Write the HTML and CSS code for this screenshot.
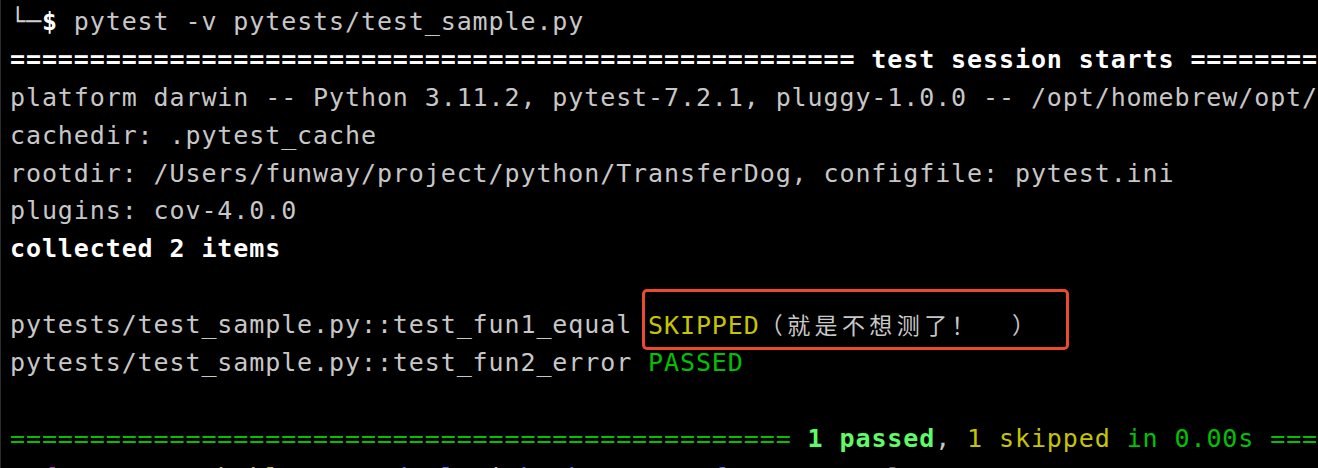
FILE: index.html
```html
<!DOCTYPE html>
<html lang="en">

<head>
    <meta charset="UTF-8">
    <meta name="viewport" content="width=device-width, initial-scale=1.0">
    <title>pytest -v</title>

    <link rel="stylesheet" href="styles.css">

</head>

<body>
    <div class="term">
        <div class="line"><span class="box">└─</span><b class="hi">$</b> pytest -v pytests/test_sample.py</div>
        <div class="line hi bold">===================================================== test session starts ========</div>
        <div class="line">platform darwin -- Python 3.11.2, pytest-7.2.1, pluggy-1.0.0 -- /opt/homebrew/opt/</div>
        <div class="line">cachedir: .pytest_cache</div>
        <div class="line">rootdir: /Users/funway/project/python/TransferDog, configfile: pytest.ini</div>
        <div class="line">plugins: cov-4.0.0</div>
        <div class="line hi bold">collected 2 items</div>
        <div class="line"></div>
        <div class="line">pytests/test_sample.py::test_fun1_equal <span class="mark"><span class="yellow">SKIPPED</span><span class="cjk">（就是不想测了！<span class="gap">　</span>）</span></span></div>
        <div class="line">pytests/test_sample.py::test_fun2_error <span class="green">PASSED</span></div>
        <div class="line"></div>
        <div class="line"><span class="green">================================================= </span><b class="lime">1 passed</b>, <span class="yellow">1 skipped</span> <span class="green">in 0.00s ====</span></div>
        <div class="line tail"><span class="magenta">  fun   </span><span>'</span><span class="yellow">Mac bokl  tH</span>   <span class="blue">deul  </span><span>|</span><span class="blue"> b  h   D    f  t</span>       <span class="dim">l</span>  <span class="red">!</span></div>
    </div>
</body>

</html>
```

FILE: styles.css
```css
body {
    margin: 0;
    height: 468px;
    overflow: hidden;
    background-color: #000;
    border-left: 1px solid #2b2b2b;
}

/* terminal text */
.term {
    padding: 3px 0 0 9px;
    font-family: "DejaVu Sans Mono", monospace;
    font-size: 25px;
    letter-spacing: 0.9px;
    line-height: 37.9px;
    color: #c7c7c7;
}

.line {
    height: 37.9px;
    white-space: pre;
}

.tail {
    padding-top: 1px;
}

.bold,
b {
    font-weight: bold;
}

.hi {
    color: #fff;
}

.box {
    color: #d0d0d0;
}

.yellow {
    color: #c7c400;
}

.green {
    color: #00c200;
}

.lime {
    color: #5ffa68;
}

.magenta {
    color: #c930c7;
}

.blue {
    color: #6871ff;
}

.dim {
    color: #686868;
}

.red {
    color: #e0261c;
}

.cjk {
    font-family: "Noto Sans CJK SC", sans-serif;
    font-size: 23px;
    letter-spacing: 4.4px;
}

.gap {
    letter-spacing: 10px;
}

/* red annotation round the skipped result */
.mark {
    position: relative;
    display: inline-block;
    height: 37.9px;
    vertical-align: top;
}

.mark::after {
    content: "";
    position: absolute;
    top: -17px;
    left: -6px;
    right: -30px;
    bottom: -6px;
    border: 3px solid #ec4a2c;
    border-radius: 5px;
}
```
